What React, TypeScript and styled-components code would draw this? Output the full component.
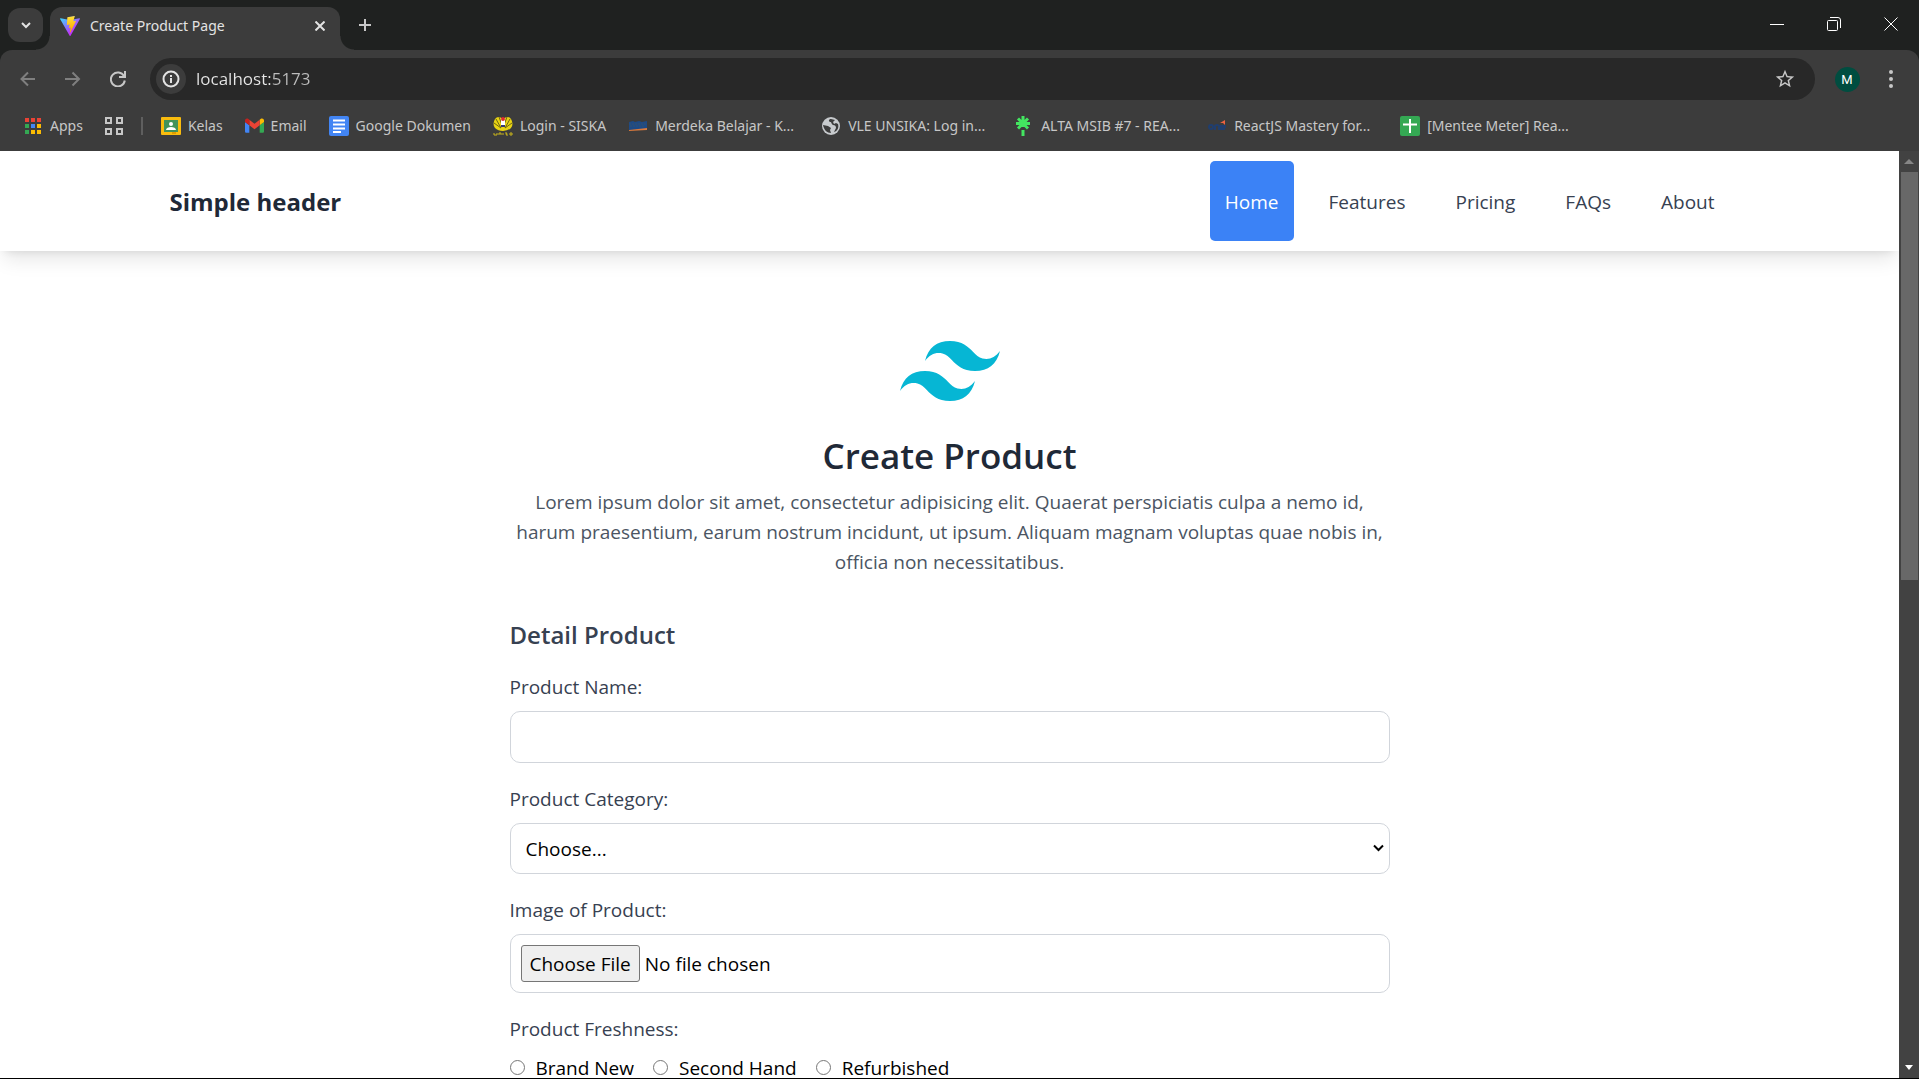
import React from "react";
import styled, { createGlobalStyle } from "styled-components";

const GlobalStyle = createGlobalStyle`
  *, *::before, *::after { box-sizing: border-box; }
  body {
    margin: 0;
    font-family: "Open Sans", "Noto Sans", sans-serif;
    font-size: 19px;
    line-height: 30px;
    background: #fff;
    color: #000;
  }
  button, input, select { font: inherit; color: inherit; }
  h1, h2, p { margin: 0; }
  svg { display: block; flex: none; }
`;

const Window = styled.div`
  display: flex;
  flex-direction: column;
  height: 100vh;
  overflow: hidden;
  border-bottom: 1px solid #000;
`;

/* ---------- browser frame ---------- */

const TabStrip = styled.div`
  flex: none;
  display: flex;
  align-items: flex-end;
  height: 50px;
  padding-left: 8px;
  background: #1f2120;
  color: #e3e3e3;
`;

const GhostButton = styled.button<{ $w: number; $h: number }>`
  flex: none;
  display: flex;
  align-items: center;
  justify-content: center;
  width: ${(p) => p.$w}px;
  height: ${(p) => p.$h}px;
  padding: 0;
  border: 0;
  border-radius: 12px;
  background: transparent;
`;

const TabSearch = styled(GhostButton)`
  margin-bottom: 8px;
  background: #3c3c3c;
`;

const Tab = styled.div`
  position: relative;
  display: flex;
  align-items: center;
  width: 290px;
  height: 43px;
  margin-left: 7px;
  padding: 0 8px 6px 10px;
  border-radius: 12px 12px 0 0;
  background: #3c3c3c;

  &::before,
  &::after {
    content: "";
    position: absolute;
    bottom: 0;
    width: 14px;
    height: 14px;
  }
  &::before {
    right: 100%;
    background: radial-gradient(circle at 0 0, transparent 13px, #3c3c3c 14px);
  }
  &::after {
    left: 100%;
    background: radial-gradient(circle at 100% 0, transparent 13px, #3c3c3c 14px);
  }
`;

const TabTitle = styled.span`
  flex: 1;
  margin-left: 10px;
  font-family: "Noto Sans", sans-serif;
  font-size: 14px;
  line-height: 20px;
  white-space: nowrap;
`;

const NewTab = styled(GhostButton)`
  margin: 0 auto 8px 8px;
  color: #c7c7c7;
`;

const WindowControls = styled.div`
  display: flex;
  align-self: flex-start;
`;

const ToolbarBack = styled.div`
  flex: none;
  background: #1f2120;
`;

const Toolbar = styled.div`
  display: flex;
  align-items: center;
  height: 58px;
  padding: 0 3px 0 5px;
  border-radius: 12px 12px 0 0;
  background: #3c3c3c;
  color: #c7c7c7;
`;

const Omnibox = styled.div`
  flex: 1;
  display: flex;
  align-items: center;
  height: 42px;
  margin: 0 13px 0 10px;
  padding: 0 8px 0 6px;
  border-radius: 21px;
  background: #282828;
`;

const SiteInfo = styled(GhostButton)`
  border-radius: 50%;
  background: #3c3c3c;
`;

const Address = styled.input`
  flex: 1;
  min-width: 0;
  margin-left: 10px;
  padding: 0;
  border: 0;
  outline: 0;
  background: linear-gradient(90deg, #e8e8e8 74px, #bdbdbd 74px);
  background-clip: text;
  color: transparent;
  caret-color: #e3e3e3;
  font-size: 17px;
  line-height: 24px;
`;

const Avatar = styled.span`
  display: grid;
  place-items: center;
  width: 25px;
  height: 25px;
  border-radius: 50%;
  background: #004d40;
  color: #fff;
  font: 13px/25px Roboto, sans-serif;
`;

const BookmarksBar = styled.nav`
  flex: none;
  display: flex;
  align-items: center;
  gap: 22px;
  height: 43px;
  padding: 0 23px 8px;
  background: #3c3c3c;
  color: #c7c7c7;
  font-family: "Noto Sans", sans-serif;
  font-size: 14px;
  line-height: 20px;
  white-space: nowrap;
`;

const Bookmark = styled.a<{ $long?: boolean }>`
  display: flex;
  align-items: center;
  gap: 7px;
  width: ${(p) => (p.$long ? "171px" : "auto")};
  color: inherit;
  text-decoration: none;
`;

const Divider = styled.span`
  width: 2px;
  height: 18px;
  margin: 0 -4px;
  background: #5f5f5f;
`;

/* ---------- page ---------- */

const Viewport = styled.div`
  flex: 1;
  display: flex;
  min-height: 0;
`;

const Page = styled.div`
  flex: 1;
  min-width: 0;
  overflow: hidden;
`;

const ScrollTrack = styled.div`
  flex: none;
  display: flex;
  flex-direction: column;
  align-items: center;
  width: 20px;
  background: #424242;
`;

const ScrollArrow = styled.span`
  display: grid;
  place-items: center;
  height: 21px;
`;

const ScrollThumb = styled.div`
  width: 17px;
  height: 44%;
  margin-bottom: auto;
  background: #686868;
`;

const Header = styled.header`
  box-shadow: 0 12px 19px -4px rgba(0, 0, 0, 0.1), 0 5px 8px -5px rgba(0, 0, 0, 0.1);
`;

const HeaderInner = styled.div`
  display: flex;
  align-items: center;
  justify-content: space-between;
  max-width: 1600px;
  height: 100px;
  margin: 0 auto;
  padding: 0 20px;
`;

const Brand = styled.a`
  padding-top: 2px;
  color: #1f2937;
  font-size: 24px;
  font-weight: 700;
  line-height: 36px;
  text-decoration: none;
`;

const Menu = styled.nav`
  display: flex;
  gap: 20px;
`;

const MenuLink = styled.a<{ $active?: boolean }>`
  display: flex;
  align-items: center;
  height: 80px;
  padding: 2px 15px 0;
  border-radius: 5px;
  background: ${(p) => (p.$active ? "#3b82f6" : "transparent")};
  color: ${(p) => (p.$active ? "#fff" : "#374151")};
  text-decoration: none;
`;

const Main = styled.main`
  max-width: 920px;
  margin: 0 auto;
  padding: 90px 20px 40px;
`;

const Intro = styled.section`
  display: flex;
  flex-direction: column;
  align-items: center;
  text-align: center;
`;

const Title = styled.h1`
  margin-top: 30px;
  color: #1f2937;
  font-size: 35px;
  font-weight: 600;
  line-height: 50px;
`;

const Lead = styled.p`
  margin-top: 6px;
  color: #4b5563;
`;

const Form = styled.form`
  display: flex;
  flex-direction: column;
  gap: 20px;
  margin-top: 40px;
`;

const FormTitle = styled.h2`
  margin-bottom: -2px;
  color: #374151;
  font-size: 24px;
  font-weight: 600;
  line-height: 36px;
`;

const Field = styled.div`
  display: flex;
  flex-direction: column;
  gap: 9px;
  min-width: 0;
`;

const Label = styled.label`
  padding-top: 1px;
  color: #374151;
`;

const fieldBox = `
  width: 100%;
  border: 1px solid #d1d5db;
  border-radius: 10px;
  background: #fff;
  color: #000;
`;

const TextBox = styled.input`
  ${fieldBox}
  height: 52px;
  padding: 10px;
`;

const SelectWrap = styled.div`
  position: relative;

  svg {
    position: absolute;
    top: 20px;
    right: 6px;
    pointer-events: none;
  }
`;

const Select = styled.select`
  ${fieldBox}
  display: block;
  appearance: none;
  height: 51px;
  padding: 10px 30px 10px 15px;
`;

const FileBox = styled.input`
  ${fieldBox}
  height: 59px;
  padding: 10px;

  &::file-selector-button {
    height: 37px;
    margin: 0 5px 0 0;
    padding: 0 8px;
    border: 1px solid #767676;
    border-radius: 3px;
    background: #efefef;
    color: #000;
    font: inherit;
  }
`;

const RadioGroup = styled.fieldset`
  margin: 0;
  padding: 0;
  border: 0;
`;

const Legend = styled.legend`
  margin-bottom: 9px;
  padding: 1px 0 0;
  color: #374151;
`;

const Radios = styled.div`
  display: flex;
  gap: 19px;
`;

const RadioLabel = styled.label`
  display: flex;
  gap: 11px;
`;

const Radio = styled.input`
  width: 15px;
  height: 15px;
  margin: 7px 0 0;
`;

/* ---------- icons ---------- */

const Line = ({ size, d, w = 2, color = "currentColor" }: { size: number; d: string; w?: number; color?: string }) => (
  <svg width={size} height={size} viewBox={`0 0 ${size} ${size}`} fill="none" stroke={color} strokeWidth={w}>
    <path d={d} />
  </svg>
);

const ViteIcon = () => (
  <svg width="20" height="20" viewBox="0 0 256 257">
    <defs>
      <linearGradient id="vite-a" x1="-.8%" x2="57.6%" y1="7.7%" y2="78.4%">
        <stop offset="0%" stopColor="#41D1FF" />
        <stop offset="100%" stopColor="#BD34FE" />
      </linearGradient>
      <linearGradient id="vite-b" x1="43.4%" x2="50.3%" y1="2.2%" y2="89%">
        <stop offset="0%" stopColor="#FFEA83" />
        <stop offset="8.3%" stopColor="#FFDD35" />
        <stop offset="100%" stopColor="#FFA800" />
      </linearGradient>
    </defs>
    <path fill="url(#vite-a)" d="M255.153 37.938L134.897 252.976c-2.483 4.44-8.862 4.466-11.382.048L.875 37.958c-2.746-4.814 1.371-10.646 6.827-9.67l120.385 21.517a6.537 6.537 0 0 0 2.322-.004l117.867-21.483c5.438-.991 9.574 4.796 6.877 9.62Z" />
    <path fill="url(#vite-b)" d="M185.432.063L96.44 17.501a3.268 3.268 0 0 0-2.634 3.014l-5.474 92.456a3.268 3.268 0 0 0 3.997 3.378l24.777-5.718c2.318-.535 4.413 1.507 3.936 3.838l-7.361 36.047c-.495 2.426 1.782 4.5 4.151 3.78l15.304-4.649c2.372-.72 4.652 1.36 4.15 3.788l-11.698 56.621c-.732 3.542 3.979 5.473 5.943 2.437l1.313-2.028l72.516-144.72c1.215-2.423-.88-5.186-3.54-4.672l-25.505 4.922c-2.396.462-4.435-1.77-3.759-4.114l16.646-57.705c.677-2.35-1.37-4.583-3.769-4.113Z" />
  </svg>
);

const appColors = ["#ea4335", "#ea4335", "#ea4335", "#34a853", "#4285f4", "#fbbc04", "#34a853", "#fbbc04", "#fbbc04"];

const AppsIcon = () => (
  <svg width="20" height="20">
    {appColors.map((c, i) => (
      <rect key={i} x={2 + (i % 3) * 6} y={2 + Math.floor(i / 3) * 6} width="4" height="4" fill={c} />
    ))}
  </svg>
);

const ClassroomIcon = () => (
  <svg width="20" height="20">
    <rect y="1" width="20" height="18" rx="1" fill="#f9bc0e" />
    <rect x="3" y="4" width="14" height="12" fill="#43935a" />
    <circle cx="10" cy="8" r="2" fill="#fff" />
    <path d="M5 14c0-4 10-4 10 0z" fill="#fff" />
    <path d="M11 16h4v2h-4z" fill="#e09c00" />
  </svg>
);

const GmailIcon = () => (
  <svg width="19" height="20" viewBox="52 38 88 78">
    <path fill="#4285f4" d="M58 108h14V74L52 59v43c0 3.320 2.690 6 6 6" />
    <path fill="#34a853" d="M120 108h14c3.320 0 6-2.690 6-6V59l-20 15" />
    <path fill="#fbbc04" d="M120 48v26l20-15v-8c0-7.420-8.470-11.650-14.400-7.200" />
    <path fill="#ea4335" d="M72 74V48l24 18 24-18v26L96 92" />
    <path fill="#c5221f" d="M52 51v8l20 15V48l-5.600-4.200c-5.940-4.450-14.400-.220-14.400 7.200" />
  </svg>
);

const DocsIcon = () => (
  <svg width="20" height="20">
    <rect width="20" height="20" rx="2" fill="#4285f4" />
    <path d="M4 4.500h12M4 8.500h12M4 12.500h12M4 16h8" stroke="#fff" strokeWidth="2" />
  </svg>
);

const CrestIcon = () => (
  <svg width="20" height="20">
    <path d="M10 3Q5-1 2 3Q-1 8 2 12Q5 15 10 15Q15 15 18 12Q21 8 18 3Q15-1 10 3" fill="#e8d312" />
    <path d="M3 3l5 9M1 7l7 5M17 3l-5 9M19 7l-7 5M6 1l3 8M14 1l-3 8" stroke="#6f6614" />
    <path d="M8 2h4v8H8z" fill="#fff" />
    <circle cx="10" cy="3" r="2" fill="#e02a2a" />
    <path d="M8 9h4v2H8z" fill="#353a78" />
    <path d="M1 17v2h3v-2M6 19v-2h2v2M10 17v2M12 17h2l-1 2h2M17 17h2v2h-2z" stroke="#c9b51a" fill="none" />
  </svg>
);

const KampusIcon = () => (
  <svg width="20" height="20">
    <path d="M1 6l4-1 2 1 4-1 3 1 5-1v8l-18 1z" fill="#1d4a86" />
    <path d="M1 8h17M2 10h15" stroke="#34506f" strokeDasharray="2 1" />
    <path d="M1 14l18-2v2l-18 1z" fill="#d9793c" />
  </svg>
);

const GlobeIcon = () => (
  <svg width="20" height="20">
    <circle cx="10" cy="10" r="9" fill="#c7cacd" />
    <path d="M10 3c-2 0-3 2-1 3 2 0 1 2 3 3 2 0 3 1 3 3l-2 4c4-1 5-5 4-8l-2-1-2 1-1-2 2-2zM2 9l5 1 3 2-1 2 1 3c-4 0-7-3-8-8z" fill="#3c3c3c" />
  </svg>
);

const LinktreeIcon = () => (
  <svg width="20" height="20" stroke="#43e660" strokeWidth="3" fill="none">
    <path d="M9 0v11M9 14v6M2 7.500h14M4 2.500l10 10M14 2.500l-10 10" />
  </svg>
);

const OneIcon = () => (
  <svg width="20" height="20" fill="none" stroke="#203e6e" strokeWidth="2">
    <circle cx="4" cy="11" r="2" />
    <path d="M8 14v-4q2-2 4 0v4M18 13h-4v-3h4v1h-4" />
    <path d="M13 7l5-3v5l-2-2z" fill="#ed6340" stroke="none" />
  </svg>
);

const SheetsIcon = () => (
  <svg width="20" height="20">
    <rect width="20" height="20" rx="2" fill="#34a853" />
    <path d="M3 8.500h14M10 3v14" stroke="#fff" strokeWidth="2" />
  </svg>
);

const TailwindLogo = () => (
  <svg width="100" height="60" viewBox="0 0 54 32.4" role="img" aria-label="Tailwind CSS">
    <path fill="#06b6d4" d="M27 0c-7.2 0-11.7 3.6-13.5 10.8 2.7-3.6 5.85-4.95 9.45-4.05 2.054.513 3.522 2.004 5.147 3.653C30.744 13.09 33.808 16.2 40.5 16.2c7.2 0 11.7-3.6 13.5-10.8-2.7 3.6-5.85 4.95-9.45 4.05-2.054-.513-3.522-2.004-5.147-3.653C36.756 3.11 33.692 0 27 0zM13.5 16.2C6.3 16.2 1.8 19.8 0 27c2.7-3.6 5.85-4.95 9.45-4.05 2.054.514 3.522 2.004 5.147 3.653C17.244 29.29 20.308 32.4 27 32.4c7.2 0 11.7-3.6 13.5-10.8-2.7 3.6-5.85 4.95-9.45 4.05-2.054-.513-3.522-2.004-5.147-3.653C23.256 19.31 20.192 16.2 13.5 16.2z" />
  </svg>
);

/* ---------- content ---------- */

const bookmarks = [
  { name: "Kelas", Icon: ClassroomIcon },
  { name: "Email", Icon: GmailIcon },
  { name: "Google Dokumen", Icon: DocsIcon },
  { name: "Login - SISKA", Icon: CrestIcon },
  { name: "Merdeka Belajar - K...", Icon: KampusIcon, long: true },
  { name: "VLE UNSIKA: Log in...", Icon: GlobeIcon, long: true },
  { name: "ALTA MSIB #7 - REA...", Icon: LinktreeIcon, long: true },
  { name: "ReactJS Mastery for...", Icon: OneIcon, long: true },
  { name: "[Mentee Meter] Rea...", Icon: SheetsIcon, long: true },
];

const menu = ["Home", "Features", "Pricing", "FAQs", "About"];
const conditions = ["Brand New", "Second Hand", "Refurbished"];

const BrowserFrame = () => (
  <>
    <TabStrip>
      <TabSearch $w={35} $h={34} aria-label="Search tabs">
        <Line size={12} d="M2 4l4 4 4-4" />
      </TabSearch>
      <Tab>
        <ViteIcon />
        <TabTitle>Create Product Page</TabTitle>
        <GhostButton $w={24} $h={24} aria-label="Close tab">
          <Line size={10} d="M.5.5l9 9M9.500.5l-9 9" />
        </GhostButton>
      </Tab>
      <NewTab $w={34} $h={34} aria-label="New tab">
        <Line size={14} d="M7 1v12M1 7h12" />
      </NewTab>
      <WindowControls>
        <GhostButton $w={57} $h={48} aria-label="Minimize">
          <Line size={14} d="M0 7.500h14" w={1} color="#fff" />
        </GhostButton>
        <GhostButton $w={57} $h={48} aria-label="Restore">
          <svg width="14" height="14" fill="none" stroke="#fff">
            <rect x=".5" y="3.500" width="10" height="10" rx="1" />
            <path d="M3 .5h8q2.500 0 2.500 2.500v8" />
          </svg>
        </GhostButton>
        <GhostButton $w={57} $h={48} aria-label="Close">
          <Line size={14} d="M.5.5l13 13M13.500.5l-13 13" w={1} color="#fff" />
        </GhostButton>
      </WindowControls>
    </TabStrip>
    <ToolbarBack>
      <Toolbar>
        <GhostButton $w={45} $h={42} aria-label="Back">
          <Line size={16} d="M15 8H1M8 1.500L1.500 8l6.500 6.500" color="#7f7f7f" />
        </GhostButton>
        <GhostButton $w={45} $h={42} aria-label="Forward">
          <Line size={16} d="M0 8h14M7.500 1.500L14 8l-6.500 6.500" color="#7f7f7f" />
        </GhostButton>
        <GhostButton $w={45} $h={42} aria-label="Reload">
          <svg width="16" height="16" fill="none" stroke="currentColor" strokeWidth="2">
            <path d="M14 5A7 7 0 1 0 14.800 9.500M15 0v6H9" />
          </svg>
        </GhostButton>
        <Omnibox>
          <SiteInfo $w={30} $h={30} aria-label="View site information">
            <svg width="18" height="18" fill="none" stroke="#e3e3e3" strokeWidth="2">
              <circle cx="9" cy="9" r="7.500" />
              <path d="M9 8v5M9 5v2" />
            </svg>
          </SiteInfo>
          <Address aria-label="Address" defaultValue="localhost:5173" />
          <GhostButton $w={44} $h={34} aria-label="Bookmark this tab">
            <svg width="22" height="22" viewBox="0 0 24 24" fill="currentColor">
              <path d="M22 9.240l-7.190-.620L12 2 9.190 8.630 2 9.240l5.460 4.730L5.820 21 12 17.270 18.180 21l-1.630-7.030L22 9.240zM12 15.400l-3.760 2.270 1-4.280-3.320-2.880 4.380-.380L12 6.100l1.710 4.040 4.380.380-3.320 2.880 1 4.280L12 15.400z" />
            </svg>
          </GhostButton>
        </Omnibox>
        <GhostButton $w={38} $h={38} aria-label="Profile">
          <Avatar>M</Avatar>
        </GhostButton>
        <GhostButton $w={50} $h={38} aria-label="Menu">
          <svg width="4" height="18" fill="currentColor">
            <circle cx="2" cy="2" r="2" />
            <circle cx="2" cy="9" r="2" />
            <circle cx="2" cy="16" r="2" />
          </svg>
        </GhostButton>
      </Toolbar>
    </ToolbarBack>
    <BookmarksBar aria-label="Bookmarks">
      <Bookmark href="#apps">
        <AppsIcon />
        Apps
      </Bookmark>
      <svg width="18" height="18" fill="none" stroke="currentColor" strokeWidth="2">
        <path d="M1 1h5v5H1zM12 1h5v5h-5zM1 12h5v5H1zM12 12h5v5h-5z" />
      </svg>
      <Divider />
      {bookmarks.map(({ name, Icon, long }) => (
        <Bookmark key={name} href="#bookmark" $long={long}>
          <Icon />
          {name}
        </Bookmark>
      ))}
    </BookmarksBar>
  </>
);

const CreateProduct = () => (
  <Page>
    <Header>
      <HeaderInner>
        <Brand href="#top">Simple header</Brand>
        <Menu aria-label="Main">
          {menu.map((item, i) => (
            <MenuLink key={item} href={`#${item.toLowerCase()}`} $active={i === 0}>
              {item}
            </MenuLink>
          ))}
        </Menu>
      </HeaderInner>
    </Header>
    <Main>
      <Intro>
        <TailwindLogo />
        <Title>Create Product</Title>
        <Lead>
          Lorem ipsum dolor sit amet, consectetur adipisicing elit. Quaerat perspiciatis culpa a nemo id, harum
          praesentium, earum nostrum incidunt, ut ipsum. Aliquam magnam voluptas quae nobis in, officia non
          necessitatibus.
        </Lead>
      </Intro>
      <Form>
        <FormTitle>Detail Product</FormTitle>
        <Field>
          <Label htmlFor="name">Product Name:</Label>
          <TextBox id="name" type="text" />
        </Field>
        <Field>
          <Label htmlFor="category">Product Category:</Label>
          <SelectWrap>
            <Select id="category">
              <option>Choose...</option>
            </Select>
            <Line size={11} d="M1 2.500l4.500 4.500 4.500-4.500" color="#000" />
          </SelectWrap>
        </Field>
        <Field>
          <Label htmlFor="image">Image of Product:</Label>
          <FileBox id="image" type="file" />
        </Field>
        <RadioGroup>
          <Legend>Product Freshness:</Legend>
          <Radios>
            {conditions.map((c) => (
              <RadioLabel key={c}>
                <Radio type="radio" name="freshness" value={c} />
                {c}
              </RadioLabel>
            ))}
          </Radios>
        </RadioGroup>
      </Form>
    </Main>
  </Page>
);

export default function App() {
  return (
    <Window>
      <GlobalStyle />
      <BrowserFrame />
      <Viewport>
        <CreateProduct />
        <ScrollTrack aria-hidden="true">
          <ScrollArrow>
            <svg width="10" height="5">
              <path d="M0 5l5-5 5 5z" fill="#868686" />
            </svg>
          </ScrollArrow>
          <ScrollThumb />
          <ScrollArrow>
            <svg width="8" height="5">
              <path d="M0 0h8l-4 5z" fill="#fff" />
            </svg>
          </ScrollArrow>
        </ScrollTrack>
      </Viewport>
    </Window>
  );
}
